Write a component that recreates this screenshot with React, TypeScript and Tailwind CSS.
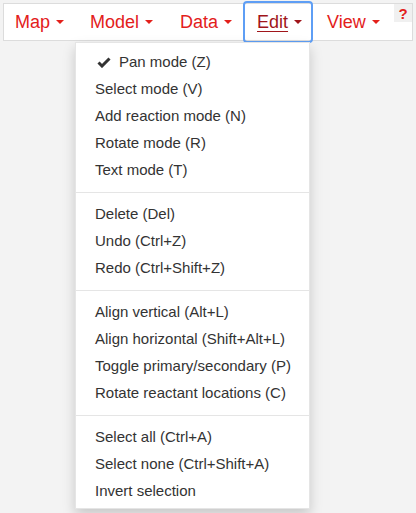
import React from "react";

type Item = { label: string; checked?: boolean };

const GROUPS: Item[][] = [
  [
    { label: "Pan mode (Z)", checked: true },
    { label: "Select mode (V)" },
    { label: "Add reaction mode (N)" },
    { label: "Rotate mode (R)" },
    { label: "Text mode (T)" },
  ],
  [{ label: "Delete (Del)" }, { label: "Undo (Ctrl+Z)" }, { label: "Redo (Ctrl+Shift+Z)" }],
  [
    { label: "Align vertical (Alt+L)" },
    { label: "Align horizontal (Shift+Alt+L)" },
    { label: "Toggle primary/secondary (P)" },
    { label: "Rotate reactant locations (C)" },
  ],
  [{ label: "Select all (Ctrl+A)" }, { label: "Select none (Ctrl+Shift+A)" }, { label: "Invert selection" }],
];

const NAV = [
  { label: "Map", w: "w-[72px]", pl: "pl-[11px]" },
  { label: "Model", w: "w-[90px]", pl: "pl-[14px]" },
  { label: "Data", w: "w-[77px]", pl: "pl-[14px]" },
  { label: "Edit", w: "w-[70px]", pl: "pl-[14px]", active: true },
  { label: "View", w: "w-[77px]", pl: "pl-[14px]" },
];

function Caret({ dark }: { dark?: boolean }) {
  return (
    <span
      className={
        "ml-[6px] inline-block h-0 w-0 border-x-[4px] border-t-[4px] border-x-transparent " +
        (dark ? "border-t-[#a0151a]" : "border-t-[#e3201b]")
      }
    />
  );
}

function Check() {
  return (
    <svg width="14" height="11" viewBox="0 0 14 11" className="mr-[8px] ml-[2px]">
      <path d="M1.5 5.5 L5 9 L12.5 1.5" fill="none" stroke="#333" strokeWidth="3" />
    </svg>
  );
}

export default function App() {
  return (
    <div
      className="relative h-[513px] w-[416px] overflow-hidden bg-[#f3f3f3] pt-[3px]"
      style={{ fontFamily: '"Liberation Sans", Arial, sans-serif' }}
    >
      {/* Menu bar */}
      <div className="relative mx-[3px] flex h-[38px] items-stretch border border-[#dcdcdc] bg-white">
        {NAV.map((n) => (
          <div
            key={n.label}
            className={"relative flex items-center text-[18px] " + n.w + " " + n.pl}
          >
            <span
              className={
                n.active ? "text-[#a0151a] underline decoration-1 underline-offset-[3px]" : "text-[#e3201b]"
              }
            >
              {n.label}
            </span>
            <Caret dark={n.active} />
            {n.active && (
              <span className="absolute inset-x-0 -bottom-[3px] -top-[3px] rounded-[4px] border-2 border-[#5e9ef5]" />
            )}
          </div>
        ))}
        <div className="absolute right-0 top-0 flex h-[18px] w-[18px] items-center justify-center bg-[#f0f0f0] text-[15px] font-bold leading-none text-[#e3201b]">
          ?
        </div>
      </div>

      {/* Edit dropdown */}
      <div className="absolute left-[75px] top-[42px] w-[235px] border border-black/10 bg-white pb-[3px] pt-[6px] shadow-[0_6px_12px_rgba(0,0,0,0.175)]">
        {GROUPS.map((g, gi) => (
          <div key={gi}>
            {gi > 0 && <div className="my-2 h-px bg-[#e5e5e5]" />}
            {g.map((it) => (
              <div
                key={it.label}
                className="flex h-[27px] items-center whitespace-nowrap px-[19px] text-[15px] text-[#333]"
              >
                {it.checked && <Check />}
                {it.label}
              </div>
            ))}
          </div>
        ))}
      </div>
    </div>
  );
}
